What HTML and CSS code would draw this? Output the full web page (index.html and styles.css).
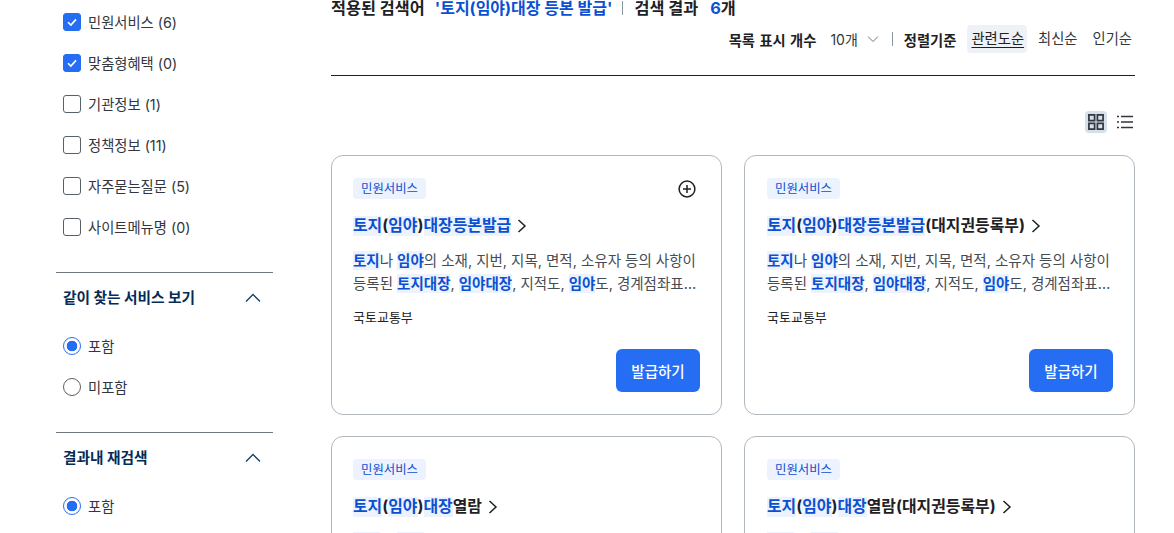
FILE: index.html
```html
<!DOCTYPE html>
<html lang="ko">
<head>
  <meta charset="UTF-8">
  <title>검색 결과</title>
  <link rel="stylesheet" href="styles.css">
</head>
<body>
<div class="page">
  <aside class="side">
    <ul class="opts">
      <li><span class="chk on"><svg viewBox="0 0 18 18"><path d="M5 9.2l2.9 2.9L13 6.4"/></svg></span>민원서비스 (6)</li>
      <li><span class="chk on"><svg viewBox="0 0 18 18"><path d="M5 9.2l2.9 2.9L13 6.4"/></svg></span>맞춤형혜택 (0)</li>
      <li><span class="chk"></span>기관정보 (1)</li>
      <li><span class="chk"></span>정책정보 (11)</li>
      <li><span class="chk"></span>자주묻는질문 (5)</li>
      <li><span class="chk"></span>사이트메뉴명 (0)</li>
    </ul>
    <div class="group">
      <div class="group-head">같이 찾는 서비스 보기
        <svg viewBox="0 0 16 16"><path d="M1 12.500L8 5.500l7 7"/></svg>
      </div>
      <ul class="opts">
        <li><span class="rad on"></span>포함</li>
        <li><span class="rad"></span>미포함</li>
      </ul>
    </div>
    <div class="group">
      <div class="group-head">결과내 재검색
        <svg viewBox="0 0 16 16"><path d="M1 12.500L8 5.500l7 7"/></svg>
      </div>
      <ul class="opts">
        <li><span class="rad on"></span>포함</li>
      </ul>
    </div>
  </aside>

  <main class="main">
    <div class="result-title">
      적용된 검색어 <em class="q">'토지(임야)대장 등본 발급'</em><i class="bar"></i>검색 결과 <em class="n">6</em>개
    </div>
    <div class="sort">
      <b class="per-page">목록 표시 개수</b>
      <span class="count">10개
        <svg viewBox="0 0 12 12"><path d="M1 3.5l5 5 5-5"/></svg>
      </span>
      <i class="bar"></i>
      <b>정렬기준</b>
      <span class="tab current"><u>관련도순</u></span>
      <span class="tab">최신순</span>
      <span class="tab">인기순</span>
    </div>
    <div class="view">
      <span class="view-btn current">
        <svg viewBox="0 0 16 16"><path d="M.9.900h5.700v5.700H.9zM9.400.900h5.700v5.700H9.400zM.9 9.400h5.700v5.700H.9zM9.400 9.400h5.700v5.700H9.400z"/></svg>
      </span>
      <span class="view-btn">
        <svg class="list-icon" viewBox="0 0 16 16"><path d="M4 2.500h12M4 8h12M4 13.500h12M0 2.500h2M0 8h2M0 13.500h2"/></svg>
      </span>
    </div>
    <div class="cards">
      <div class="card">
        <div class="card-top"><span class="tag">민원서비스</span>
          <svg class="plus" viewBox="0 0 18 18"><circle cx="9" cy="9" r="7.900"/><path d="M9 5v8M5 9h8"/></svg>
        </div>
        <h3><mark>토지</mark>(<mark>임야</mark>)<mark>대장등본발급</mark><svg viewBox="0 0 10 16"><path d="M1.500 2l6.500 6-6.500 6"/></svg></h3>
        <p class="desc"><mark>토지</mark>나 <mark>임야</mark>의 소재, 지번, 지목, 면적, 소유자 등의 사항이 등록된 <mark>토지대장</mark>, <mark>임야대장</mark>, 지적도, <mark>임야</mark>도, 경계점좌표등록부 등을 발급받을 수 있습니다.</p>
        <div class="org">국토교통부</div>
        <div class="card-foot"><button class="btn">발급하기</button></div>
      </div>
      <div class="card">
        <div class="card-top"><span class="tag">민원서비스</span></div>
        <h3><mark>토지</mark>(<mark>임야</mark>)<mark>대장등본발급</mark>(대지권등록부)<svg viewBox="0 0 10 16"><path d="M1.500 2l6.500 6-6.500 6"/></svg></h3>
        <p class="desc"><mark>토지</mark>나 <mark>임야</mark>의 소재, 지번, 지목, 면적, 소유자 등의 사항이 등록된 <mark>토지대장</mark>, <mark>임야대장</mark>, 지적도, <mark>임야</mark>도, 경계점좌표등록부 등을 발급받을 수 있습니다.</p>
        <div class="org">국토교통부</div>
        <div class="card-foot"><button class="btn">발급하기</button></div>
      </div>
      <div class="card">
        <div class="card-top"><span class="tag">민원서비스</span></div>
        <h3><mark>토지</mark>(<mark>임야</mark>)<mark>대장</mark>열람<svg viewBox="0 0 10 16"><path d="M1.500 2l6.500 6-6.500 6"/></svg></h3>
        <p class="desc"><mark>토지</mark>나 <mark>임야</mark>의 소재, 지번, 지목, 면적, 소유자 등의 사항이 등록된 <mark>토지대장</mark>, <mark>임야대장</mark>을 열람할 수 있습니다.</p>
      </div>
      <div class="card">
        <div class="card-top"><span class="tag">민원서비스</span></div>
        <h3><mark>토지</mark>(<mark>임야</mark>)<mark>대장</mark>열람(대지권등록부)<svg viewBox="0 0 10 16"><path d="M1.500 2l6.500 6-6.500 6"/></svg></h3>
        <p class="desc"><mark>토지</mark>나 <mark>임야</mark>의 소재, 지번, 지목, 면적, 소유자 등의 사항이 등록된 <mark>토지대장</mark>, <mark>임야대장</mark>을 열람할 수 있습니다.</p>
      </div>
    </div>
  </main>
</div>
</body>
</html>
```

FILE: styles.css
```css
* {
  margin: 0;
  padding: 0;
  box-sizing: border-box;
}

html, body {
  height: 533px;
  overflow: hidden;
  background: #fff;
}

body {
  font-family: Inter, "Noto Sans CJK KR", sans-serif;
  font-size: 14.3px;
  color: #1e2124;
}

ul {
  list-style: none;
}

em, i {
  font-style: normal;
}

svg {
  fill: none;
  stroke: currentColor;
}

.page {
  display: flex;
  gap: 58px;
  padding-left: 56px;
}

/* left filter column */
.side {
  width: 217px;
  flex: none;
}

.opts {
  padding: 1px 7px 0;
  display: flex;
  flex-direction: column;
}

.opts li {
  height: 41px;
  display: flex;
  align-items: center;
  gap: 7px;
  color: #33363d;
}

.chk {
  width: 18px;
  height: 18px;
  border: 1px solid #58616a;
  border-radius: 3px;
  flex: none;
}

.chk.on {
  background: #256ef4;
  border-color: #256ef4;
  color: #fff;
}

.chk svg {
  display: block;
  width: 18px;
  height: 18px;
  margin: -1px;
  stroke-width: 1.6;
}

.rad {
  width: 18px;
  height: 18px;
  border: 1px solid #58616a;
  border-radius: 50%;
  flex: none;
}

.rad.on {
  border-color: #256ef4;
  background: radial-gradient(circle, #256ef4 0, #256ef4 5px, #fff 5.6px);
}

.group {
  border-top: 1px solid #6d7882;
  margin-top: 25px;
}

.group-head {
  height: 47px;
  padding: 0 12px 0 7px;
  display: flex;
  align-items: center;
  justify-content: space-between;
  font-size: 14.7px;
  font-weight: 700;
  color: #052b57;
}

.group-head svg {
  width: 16px;
  height: 16px;
  stroke-width: 1.400;
  color: #1d3f6b;
}

.group .opts {
  padding-top: 5px;
}

/* results */
.main {
  width: 804px;
  flex: none;
}

.result-title {
  margin-top: -5px;
  height: 26px;
  line-height: 26px;
  font-size: 16.3px;
  font-weight: 700;
  white-space: nowrap;
  display: flex;
  align-items: center;
  gap: 5px;
}

.result-title .q {
  color: #0b50d0;
  font-size: 16px;
  margin-left: 5px;
}

.result-title .n {
  color: #0b50d0;
  margin-left: 7px;
  margin-right: -5px;
}

.bar {
  width: 1px;
  height: 14px;
  background: #8a949e;
  display: inline-block;
}

.result-title .bar {
  margin: 0 6px 0 5px;
}

.sort {
  height: 51px;
  padding-bottom: 22px;
  margin-top: 4px;
  border-bottom: 1px solid #1e2124;
  display: flex;
  align-items: center;
  justify-content: flex-end;
}

.sort b {
  font-weight: 700;
}

.per-page {
  word-spacing: 1px;
}

.count {
  display: flex;
  align-items: center;
  gap: 9px;
  margin: 0 13px 0 14px;
  font-size: 14px;
  color: #33363d;
}

.count svg {
  width: 12px;
  height: 12px;
  color: #6d7882;
}

.sort .bar {
  margin-right: 11px;
}

.tab {
  height: 28px;
  padding: 0 4px;
  margin-left: 7px;
  line-height: 28px;
  border-radius: 4px;
  color: #33363d;
}

.tab.current {
  margin-left: 11px;
  padding-right: 3px;
  background: #eef2f7;
  color: #1e2124;
}

.tab u {
  text-underline-offset: 3px;
}

.tab:last-child {
  margin-right: -1px;
}

.view {
  height: 22px;
  margin: 35px 0 22px;
  display: flex;
  justify-content: flex-end;
  gap: 6px;
}

.view-btn {
  width: 22px;
  height: 22px;
  border-radius: 4px;
  display: flex;
  align-items: center;
  justify-content: center;
  color: #33363d;
}

.view-btn.current {
  background: #d6e0eb;
}

.view-btn svg {
  width: 16px;
  height: 16px;
  stroke-width: 1.700;
}

.view-btn .list-icon {
  margin-left: 2px;
  stroke-width: 1.300;
}

.cards {
  display: grid;
  grid-template-columns: 391px 391px;
  gap: 21px 22px;
}

.card {
  height: 260px;
  padding: 22px 21px;
  border: 1px solid #b1b8be;
  border-radius: 12px;
}

.card:nth-child(even) {
  padding-left: 22px;
}

.card-top {
  display: flex;
  align-items: center;
  justify-content: space-between;
  height: 21px;
}

.tag {
  height: 21px;
  padding: 0 8px;
  line-height: 21px;
  font-size: 12.4px;
  color: #0b50d0;
  background: #ecf2fe;
  border-radius: 4px;
}

.plus {
  width: 18px;
  height: 18px;
  margin-right: 4px;
  stroke-width: 1.500;
  color: #1e2124;
}

.card h3 {
  margin-top: 15px;
  font-size: 15.900px;
  line-height: 24px;
  font-weight: 700;
  display: flex;
  align-items: center;
}

.card h3 svg {
  width: 10px;
  height: 16px;
  margin-left: 6px;
  stroke-width: 1.500;
}

mark {
  background: #ecf2fe;
  color: #0b50d0;
  display: inline-block;
  line-height: 20px;
}

.desc {
  margin-top: 11px;
  font-size: 14.5px;
  line-height: 23px;
  color: #464c53;
  display: -webkit-box;
  -webkit-box-orient: vertical;
  -webkit-line-clamp: 2;
  overflow: hidden;
}

.desc mark {
  font-weight: 700;
  line-height: 19px;
}

.org {
  margin-top: 13px;
  font-size: 13px;
  line-height: 18px;
  color: #1e2124;
}

.card-foot {
  display: flex;
  justify-content: flex-end;
  margin-top: 23px;
}

.btn {
  width: 84px;
  height: 43px;
  border: 0;
  border-radius: 6px;
  background: #256ef4;
  color: #fff;
  font: 500 14.5px Inter, "Noto Sans CJK KR", sans-serif;
}
```
